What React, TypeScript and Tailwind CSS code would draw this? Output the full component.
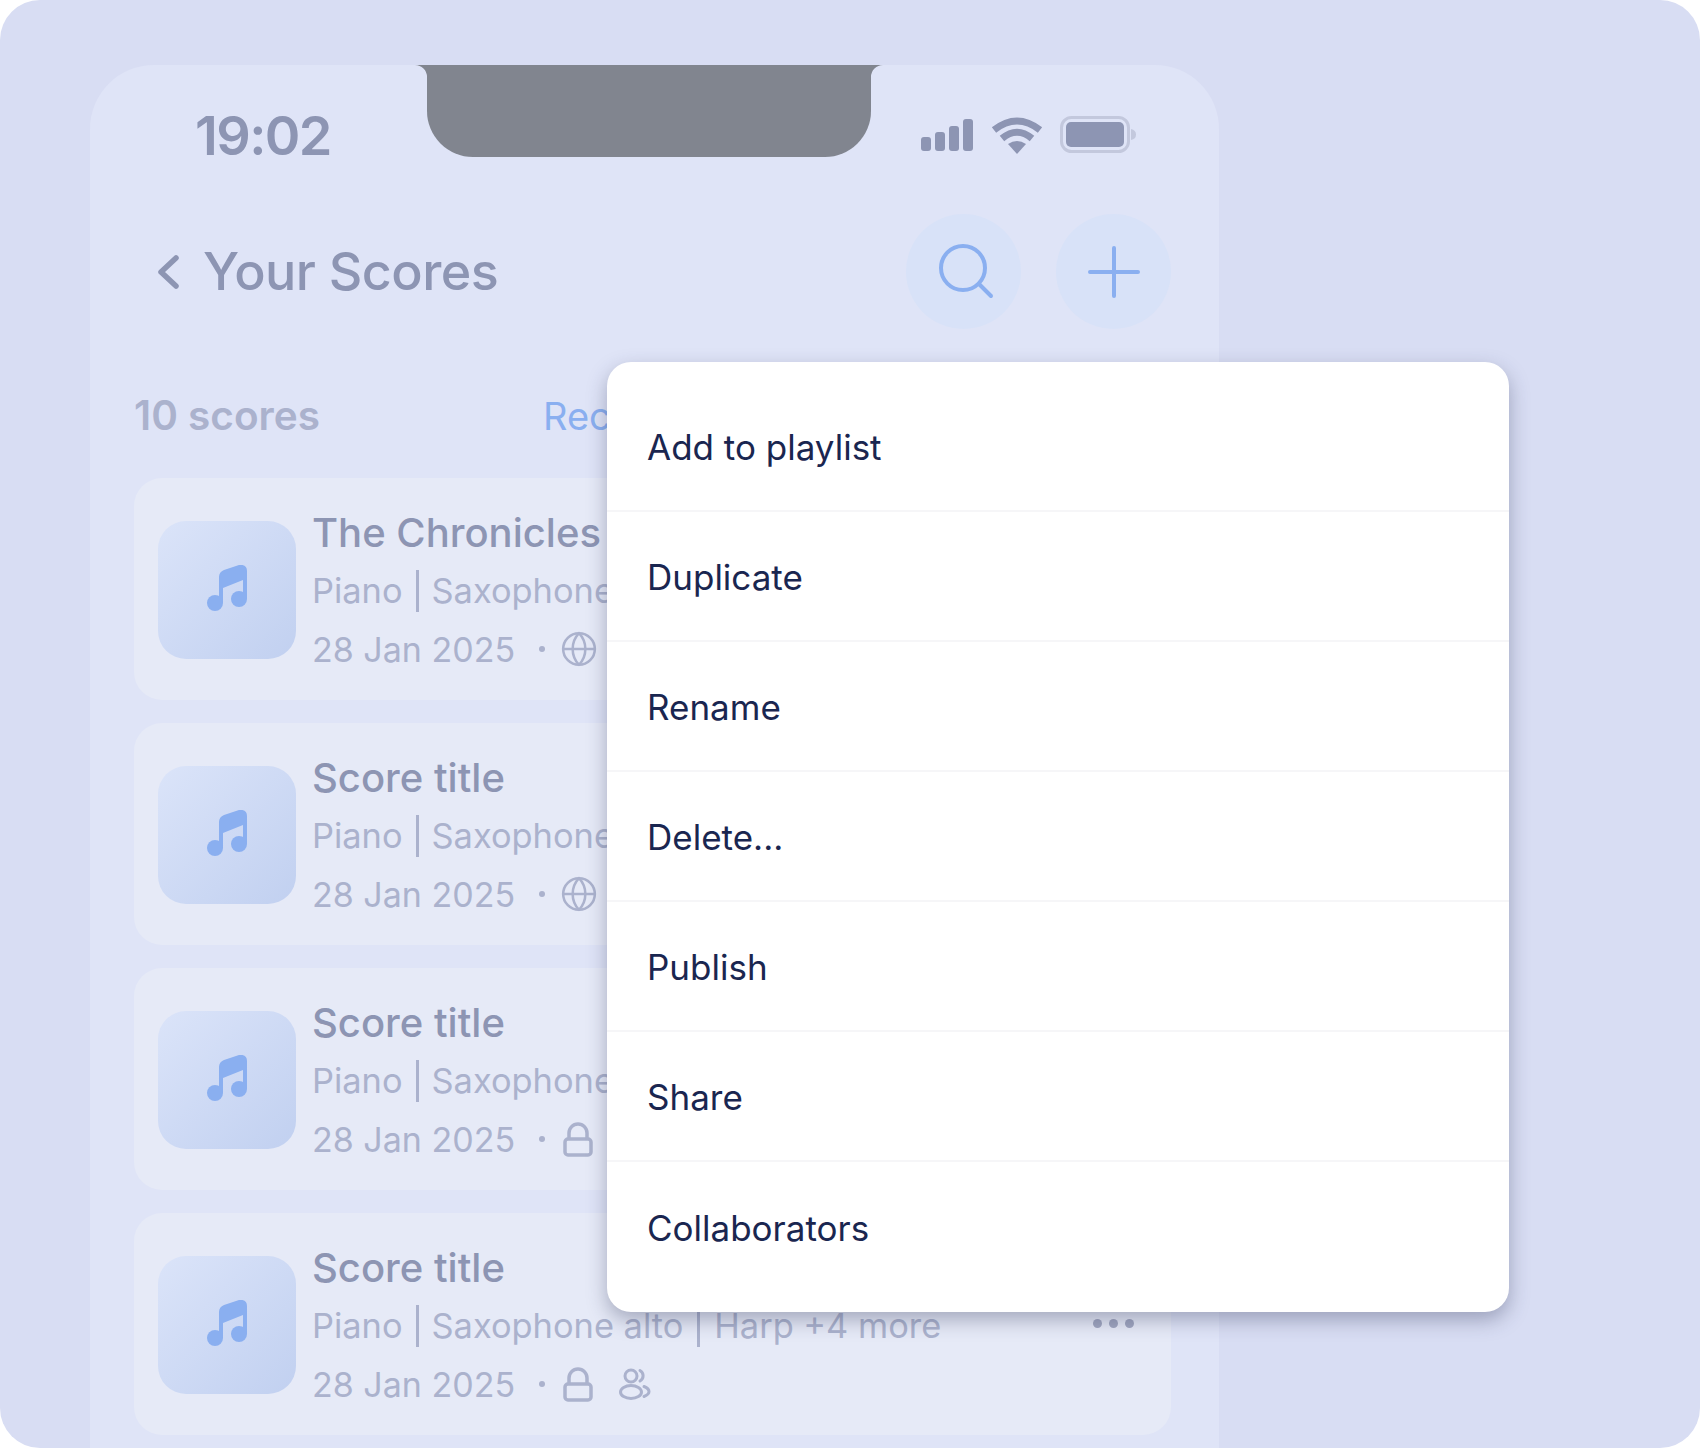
import { Globe } from "lucide-react";

type Score = {
  title: string;
  isPublic: boolean;
  shared?: boolean;
};

const scores: Score[] = [
  { title: "The Chronicles of Narnia", isPublic: true },
  { title: "Score title", isPublic: true },
  { title: "Score title", isPublic: false },
  { title: "Score title", isPublic: false, shared: true },
];

const menuItems = ["Add to playlist", "Duplicate", "Rename", "Delete...", "Publish", "Share", "Collaborators"];

function MusicNote() {
  return (
    <svg className="mb-[4px]" width="40" height="46" viewBox="67 64 40 46" fill="#8aaff0">
      <circle cx="75" cy="102" r="8" />
      <circle cx="99" cy="98" r="8" />
      <path d="M79 102V76Q79 71 84 69L99 64Q107 63 107 70V98H103V79L83 87V102Z" />
    </svg>
  );
}

function LockIcon() {
  return (
    <svg width="30" height="36" viewBox="0 0 30 36" fill="none" stroke="#abb2cd" strokeWidth="3.5">
      <rect x="2" y="18" width="26" height="16" rx="3" />
      <path d="M6 18V12a9 9 0 0 1 18 0V18" />
    </svg>
  );
}

function UsersIcon() {
  return (
    <svg width="32" height="34" viewBox="0 0 32 34" fill="none" stroke="#abb2cd" strokeWidth="3" strokeLinecap="round">
      <circle cx="12" cy="9" r="6" />
      <ellipse cx="12" cy="25" rx="10.5" ry="6.5" />
      <path d="M21 3.5a6 6 0 0 1 0 10.5" />
      <path d="M25 19.5q5 2 5 5t-5 5" />
    </svg>
  );
}

function ScoreCard({ score }: { score: Score }) {
  return (
    <div className="relative flex h-[222px] w-[1037px] shrink-0 items-center gap-[16px] rounded-[28px] bg-[#e6eaf7] pt-[2px] pl-[24px]">
      <div className="flex h-[138px] w-[138px] shrink-0 items-center justify-center rounded-[28px] bg-gradient-to-br from-[#dbe4f9] to-[#c1d0f0]">
        <MusicNote />
      </div>
      <div className="mt-[2px] flex flex-col">
        <div className="flex h-[58px] items-center text-[40px] font-medium whitespace-nowrap text-[#8d95b3]">{score.title}</div>
        <div className="flex h-[58px] items-center text-[34.400px] whitespace-nowrap text-[#abb2cd]">
          Piano
          <span className="mx-[13px] h-[42px] w-[3px] bg-[#abb2cd]" />
          Saxophone alto
          <span className="mx-[14px] h-[42px] w-[3px] bg-[#abb2cd]" />
          Harp +4 more
        </div>
        <div className="flex h-[58px] items-center text-[34px] whitespace-nowrap text-[#abb2cd]">
          28 Jan 2025
          <span className="mr-[18px] ml-[24px] h-[6px] w-[6px] rounded-full bg-[#abb2cd]" />
          {score.isPublic ? <Globe size={38} strokeWidth={1.6} color="#abb2cd" className="-ml-[3px]" /> : <LockIcon />}
          {score.shared && (
            <span className="ml-[26px]">
              <UsersIcon />
            </span>
          )}
        </div>
      </div>
      <div className="absolute top-[106px] right-[37px] flex gap-[7px]">
        <span className="h-[9px] w-[9px] rounded-full bg-[#a0a6c0]" />
        <span className="h-[9px] w-[9px] rounded-full bg-[#a0a6c0]" />
        <span className="h-[9px] w-[9px] rounded-full bg-[#a0a6c0]" />
      </div>
    </div>
  );
}

export default function App() {
  return (
    <div className="relative h-[1448px] w-[1700px] overflow-hidden rounded-[40px] bg-[#d8ddf3] pt-[65px] pl-[90px] [font-family:Inter,sans-serif]">
      <div className="h-[1383px] w-[1129px] overflow-hidden rounded-t-[64px] bg-[#dfe4f7]">
        {/* status bar */}
        <div className="relative flex h-[91px] items-start">
          <div className="flex h-[91px] w-[337px] items-center pt-[50px] pl-[105px] text-[54px] leading-none font-semibold tracking-[-0.03em] text-[#8d95b3]">
            19:02
          </div>
          <div className="relative h-[92px] w-[444px] rounded-b-[46px] bg-[#81858f]">
            <svg className="absolute top-0 -left-[12px]" width="12" height="12" viewBox="0 0 12 12" fill="#81858f">
              <path d="M0 0H12V12A12 12 0 0 0 0 0Z" />
            </svg>
            <svg className="absolute top-0 -right-[12px]" width="12" height="12" viewBox="0 0 12 12" fill="#81858f">
              <path d="M12 0H0V12A12 12 0 0 1 12 0Z" />
            </svg>
          </div>
          <div className="ml-[50px] flex items-center pt-[51px]">
            <div className="flex items-end gap-[4px]">
              <span className="h-[14px] w-[10px] rounded-[3px] bg-[#8d95b3]" />
              <span className="h-[19px] w-[10px] rounded-[3px] bg-[#8d95b3]" />
              <span className="h-[25px] w-[10px] rounded-[3px] bg-[#8d95b3]" />
              <span className="h-[32px] w-[10px] rounded-[3px] bg-[#8d95b3]" />
            </div>
            <svg className="ml-[18px]" width="52" height="38" viewBox="0 0 52 38" fill="none">
              <path d="M3 14Q26 -4 49 14" stroke="#8d95b3" strokeWidth="7" />
              <path d="M11 22.500Q26 10 41 22.500" stroke="#8d95b3" strokeWidth="7" />
              <path d="M17 28Q26 22 35 28L26 38Z" fill="#8d95b3" />
            </svg>
            <svg className="ml-[17px]" width="77" height="38" viewBox="0 0 77 38" fill="none">
              <rect x="1.500" y="1.500" width="67" height="34" rx="10" stroke="#c3c8dd" strokeWidth="3" />
              <rect x="6" y="6" width="58" height="25" rx="5" fill="#8d95b3" />
              <path d="M71 13Q76 14 76 18.500T71 24Z" fill="#c3c8dd" />
            </svg>
          </div>
        </div>

        {/* header */}
        <div className="mt-[58px] flex h-[115px] items-center pr-[48px] pl-[66px]">
          <svg width="24" height="34" viewBox="0 0 24 34" fill="none" stroke="#8d95b3" strokeWidth="5.500" strokeLinecap="round" strokeLinejoin="round">
            <path d="M20 3L5 17L20 31" />
          </svg>
          <div className="ml-[23px] flex-1 text-[52px] font-medium tracking-[-0.01em] text-[#8d95b3]">Your Scores</div>
          <div className="flex h-[115px] w-[115px] items-center justify-center rounded-full bg-[#d8e2f8]">
            <svg width="60" height="60" viewBox="-3 0 60 60" fill="none" stroke="#8aaff0" strokeWidth="4" strokeLinecap="round">
              <circle cx="26" cy="26" r="22" />
              <path d="M42 42L54 54" />
            </svg>
          </div>
          <div className="ml-[35px] flex h-[115px] w-[115px] items-center justify-center rounded-full bg-[#d8e2f8]">
            <svg width="52" height="52" viewBox="0 0 52 52" fill="none" stroke="#8aaff0" strokeWidth="4" strokeLinecap="round">
              <path d="M26 2V50M2 26H50" />
            </svg>
          </div>
        </div>

        {/* list heading */}
        <div className="mt-[59px] flex items-center pl-[44px] text-[38px] leading-[56px]">
          <span className="w-[409px] text-[40.500px] font-semibold text-[#abb2cd]">10 scores</span>
          <span className="text-[#8aaff0]">Recent</span>
        </div>

        {/* cards */}
        <div className="mt-[34px] flex flex-col gap-[23px] pl-[44px]">
          {scores.map((score, i) => (
            <ScoreCard key={i} score={score} />
          ))}
        </div>
      </div>

      {/* context menu */}
      <div className="absolute top-[362px] left-[607px] w-[902px] rounded-[24px] bg-white py-[20px] shadow-[0_8px_20px_rgba(50,55,90,0.36)]">
        {menuItems.map((item, i) => (
          <div
            key={item}
            className={`flex h-[130px] items-center pt-[2px] pl-[40px] text-[35px] text-[#1a2650] ${
              i < menuItems.length - 1 ? "border-b-2 border-[#f6f6f8]" : ""
            }`}
          >
            {item}
          </div>
        ))}
      </div>
    </div>
  );
}
